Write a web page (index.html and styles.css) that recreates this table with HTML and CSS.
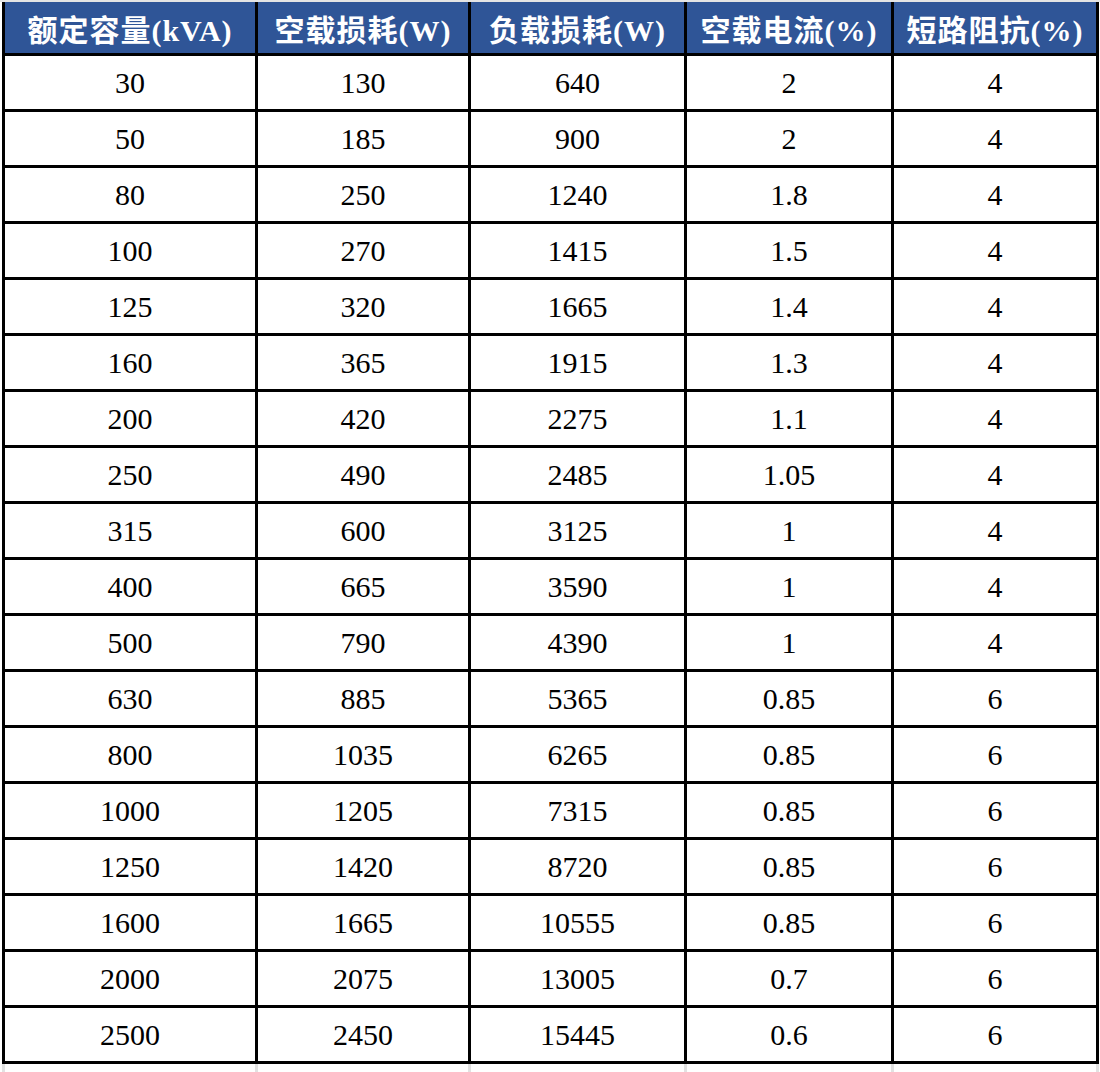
FILE: index.html
```html
<!DOCTYPE html>
<html lang="zh-CN">
<head>
<meta charset="utf-8">
<title>变压器参数表</title>
<link rel="stylesheet" href="styles.css">
</head>
<body>
<div class="topline"></div>
<div class="sheet">
  <div class="hd">额定容量(kVA)</div><div class="hd">空载损耗(W)</div><div class="hd">负载损耗(W)</div><div class="hd">空载电流(%)</div><div class="hd">短路阻抗(%)</div>
  <div class="c">30</div><div class="c">130</div><div class="c">640</div><div class="c">2</div><div class="c">4</div>
  <div class="c">50</div><div class="c">185</div><div class="c">900</div><div class="c">2</div><div class="c">4</div>
  <div class="c">80</div><div class="c">250</div><div class="c">1240</div><div class="c">1.8</div><div class="c">4</div>
  <div class="c">100</div><div class="c">270</div><div class="c">1415</div><div class="c">1.5</div><div class="c">4</div>
  <div class="c">125</div><div class="c">320</div><div class="c">1665</div><div class="c">1.4</div><div class="c">4</div>
  <div class="c">160</div><div class="c">365</div><div class="c">1915</div><div class="c">1.3</div><div class="c">4</div>
  <div class="c">200</div><div class="c">420</div><div class="c">2275</div><div class="c">1.1</div><div class="c">4</div>
  <div class="c">250</div><div class="c">490</div><div class="c">2485</div><div class="c">1.05</div><div class="c">4</div>
  <div class="c">315</div><div class="c">600</div><div class="c">3125</div><div class="c">1</div><div class="c">4</div>
  <div class="c">400</div><div class="c">665</div><div class="c">3590</div><div class="c">1</div><div class="c">4</div>
  <div class="c">500</div><div class="c">790</div><div class="c">4390</div><div class="c">1</div><div class="c">4</div>
  <div class="c">630</div><div class="c">885</div><div class="c">5365</div><div class="c">0.85</div><div class="c">6</div>
  <div class="c">800</div><div class="c">1035</div><div class="c">6265</div><div class="c">0.85</div><div class="c">6</div>
  <div class="c">1000</div><div class="c">1205</div><div class="c">7315</div><div class="c">0.85</div><div class="c">6</div>
  <div class="c">1250</div><div class="c">1420</div><div class="c">8720</div><div class="c">0.85</div><div class="c">6</div>
  <div class="c">1600</div><div class="c">1665</div><div class="c">10555</div><div class="c">0.85</div><div class="c">6</div>
  <div class="c">2000</div><div class="c">2075</div><div class="c">13005</div><div class="c">0.7</div><div class="c">6</div>
  <div class="c">2500</div><div class="c">2450</div><div class="c">15445</div><div class="c">0.6</div><div class="c">6</div>
</div>
<div class="filler">
  <div></div><div></div><div></div><div></div><div></div>
</div>
</body>
</html>
```

FILE: styles.css
```css
html, body {
  margin: 0;
  padding: 0;
  background: #ffffff;
}

.topline {
  height: 2px;
  background: #e4e4e4;
}

.sheet {
  margin-left: 2px;
  width: 1097px;
  box-sizing: border-box;
  display: grid;
  grid-template-columns: 250px 210px 213px 204px 202px;
  grid-template-rows: 51px;
  grid-auto-rows: 53px;
  gap: 3px;
  padding: 0 3px 3px 3px;
  background: #000000;
  font-family: "Liberation Serif", "Noto Sans CJK SC", serif;
}

.hd {
  background: #2f5597;
  color: #ffffff;
  font-weight: bold;
  font-size: 30px;
  letter-spacing: 1px;
  display: flex;
  align-items: center;
  justify-content: center;
  white-space: nowrap;
}

.c {
  background: #ffffff;
  color: #000000;
  font-size: 30px;
  display: flex;
  align-items: center;
  justify-content: center;
}

.filler {
  margin-left: 2px;
  width: 1097px;
  box-sizing: border-box;
  height: 10px;
  display: grid;
  grid-template-columns: 250px 210px 213px 204px 202px;
  gap: 3px;
  padding: 0 3px;
  background: #e2e2e2;
}

.filler div {
  background: #ffffff;
}
```
